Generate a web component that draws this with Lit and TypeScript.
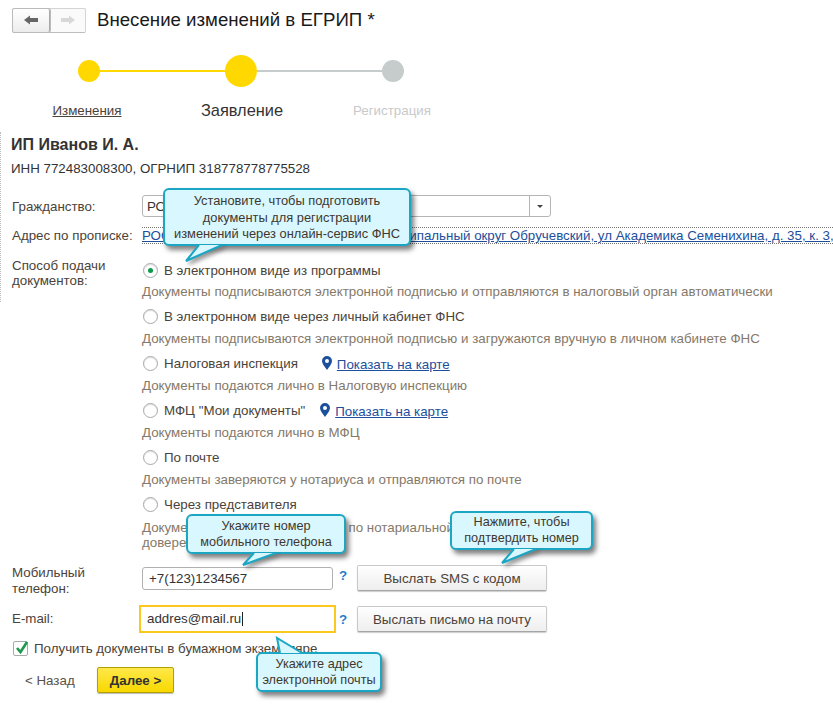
import { LitElement, html, css, svg } from "lit";
import { customElement } from "lit/decorators.js";

const pin = html`<svg class="pin" width="10" height="14" viewBox="0 0 10 14"><path fill="#1c4f9c" fill-rule="evenodd" d="M5 0a5 5 0 0 1 5 5c0 3-3 6-5 9C3 11 0 8 0 5a5 5 0 0 1 5-5zm0 3a2 2 0 1 0 0 4 2 2 0 0 0 0-4z"/></svg>`;

interface Tip { cls: string; lines: string[]; w: number; h: number; tail: string; }
const tips: Tip[] = [
  { cls: "t1", w: 248, h: 58, lines: ["Установите, чтобы подготовить", "документы для регистрации", "изменений через онлайн-сервис ФНС"], tail: "36,57 23,73 59,57" },
  { cls: "t2", w: 160, h: 40, lines: ["Укажите номер", "мобильного телефона"], tail: "68,39 57,51 90,39" },
  { cls: "t3", w: 143, h: 39, lines: ["Нажмите, чтобы", "подтвердить номер"], tail: "64,38 52,52 86,38" },
  { cls: "t4", w: 126, h: 40, lines: ["Укажите адрес", "электронной почты"], tail: "24,1 21,-14 46,1" },
];

@customElement("app-root")
export class AppRoot extends LitElement {
  static styles = css`
    :host { display: block; position: relative; width: 833px; height: 708px; overflow: hidden; background: #fff;
      font-family: "Liberation Sans", Arial, sans-serif; font-size: 13.33px; color: #4b4339; }
    * { box-sizing: border-box; }
    .edge { position: absolute; left: 0; top: 132px; height: 170px; border-left: 1px dotted #bbb; }
    .header { display: flex; align-items: center; height: 24px; margin: 8px 0 0 12px; gap: 11px; }
    .nav { display: flex; width: 74px; height: 25px; border: 1px solid #d4d4d4; border-bottom-color: #bdbdbd; border-radius: 2px; background: #fafafa; }
    .nav div { flex: 1; display: flex; align-items: center; justify-content: center; }
    .nav .back { flex: 0 0 37px; border: 1px solid #a8a8a8; border-width: 0 1px 0 0; background: linear-gradient(#fff, #ececec); box-shadow: 0 0 0 1px #bbb; border-radius: 2px; }
    h1 { margin: 0; font: 400 18.67px "Liberation Sans", sans-serif; color: #1a1a1a; }
    .steps { height: 38px; margin: 20px 0 0 78px; width: 326px; display: flex; align-items: center; justify-content: space-between; }
    .steps .dot { width: 22px; height: 22px; border-radius: 50%; background: #ffd800; }
    .steps .dot.big { width: 32px; height: 32px; }
    .steps .dot.off { background: #c6cbcc; }
    .steps .ln { flex: 1; height: 2px; background: #ffd800; }
    .steps .ln.off { background: #c6cbcc; }
    .labels { display: grid; grid-template-columns: 150px 160px 140px; margin: 8px 0 0 12px; height: 24px; align-items: center; text-align: center; }
    .labels span:nth-child(1) { text-decoration: underline; }
    .labels span:nth-child(2) { font-size: 16.4px; color: #333; }
    .labels span:nth-child(3) { color: #c9c9c9; }
    .name { margin: 14px 0 0 11px; font-weight: 700; font-size: 16px; color: #333; line-height: 18px; }
    .inn { margin: 7px 0 0 11px; line-height: 16px; color: #333; }
    .row { display: grid; grid-template-columns: 130px 1fr; margin: 0 0 0 12px; align-items: center; }
    .r1 { margin-top: 18px; height: 22px; }
    .r2 { margin-top: 10px; height: 17px; white-space: nowrap; }
    .combo { width: 409px; height: 22px; border: 1px solid #b5b5b5; border-radius: 3px; display: flex; align-items: center; padding-left: 4px; color: #333; }
    .combo span { flex: 1; }
    .combo i { width: 21px; height: 20px; border-left: 1px solid #b5b5b5; display: flex; align-items: center; justify-content: center; }
    .combo i::after { content: ""; border: 3px solid transparent; border-top: 3px solid #444; border-bottom: 0; }
    .addr { color: #1c4f9c; text-decoration: underline; border-top: 1px dotted #777; border-bottom: 1px dotted #777; padding-top: 1px; line-height: 14px; overflow: hidden; width: 691px; }
    .way { display: grid; grid-template-columns: 130px 1fr; margin: 14px 0 0 12px; }
    .way label { line-height: 15px; }
    .opts { display: flex; flex-direction: column; }
    .opt { display: flex; align-items: center; height: 23.4px; padding: 1px 0 0 1px; white-space: nowrap; }
    .radio { width: 15px; height: 15px; border: 1px solid #a8a8a8; border-radius: 50%; margin-right: 6px; background: #fff; display: flex; align-items: center; justify-content: center; flex: none; box-shadow: inset 0 1px 1px #ddd; }
    .radio.on::after { content: ""; width: 5px; height: 5px; border-radius: 50%; background: #0a9a4a; }
    .desc { color: #85796a; height: 23.4px; line-height: 22.4px; white-space: nowrap; }
    .desc.two { height: 30px; line-height: 15px; padding-top: 5px; }
    .pin { margin: 0 5px 0 0; flex: none; position: relative; top: -1px; }
    .maplink { color: #1c4f9c; text-decoration: underline; position: relative; top: 1px; }
    .l1 { margin-left: 24px; }
    .l2 { margin-left: 15px; }
    .fr { display: grid; grid-template-columns: 130px 191px 24px 191px; margin-left: 12px; align-items: center; }
    .f1 { margin-top: 21px; grid-template-rows: 24px; height: 24px; }
    .f2 { margin-top: 15px; grid-template-rows: 28px; height: 28px; }
    .fr label { line-height: 16px; }
    .f1 label { padding-top: 6px; }
    .input { height: 23px; border: 1px solid #b0b0b0; border-radius: 3px; padding-left: 6px; line-height: 21px; color: #333; }
    .f2 .input { height: 28px; width: 197px; margin-left: -3px; border: 2px solid #fdc81e; border-radius: 0; padding-left: 6px; line-height: 24px; }
    .input u { display: inline-block; width: 1px; height: 14px; background: #222; vertical-align: -3px; margin-left: 1px; }
    .q { color: #1f7fc9; font-weight: 700; font-size: 13.33px; text-align: left; padding-left: 6px; position: relative; top: -3px; }
    .f2 .q { top: 0; }
    .btn { height: 26px; width: 190px; border: 1px solid #c9c9c9; border-bottom-color: #a5a5a5; border-radius: 2px; background: linear-gradient(#fff, #eee); display: flex; align-items: center; justify-content: center; color: #4b4339; box-shadow: 0 1px 1px #ccc; }
    .check { display: flex; align-items: center; margin: 7px 0 0 13px; height: 16px; }
    .box { width: 15px; height: 15px; border: 1px solid #aaa; border-radius: 2px; margin-right: 6px; position: relative; }
    .box svg { position: absolute; left: 0; top: -2px; }
    .foot { display: flex; align-items: center; margin: 11px 0 0 25px; }
    .backl { width: 72px; color: #5a5246; }
    .next { width: 77px; height: 26px; border: 1px solid #b3a000; border-radius: 2px; background: linear-gradient(#ffe84a, #f8d800); font-weight: 700; color: #333; display: flex; align-items: center; justify-content: center; box-shadow: 0 1px 1px #bbb; }
    .tip { position: absolute; background: #d9f7ff; border: 2px solid #1ba6c4; border-radius: 6px; box-shadow: 3px 4px 5px rgba(0,0,0,.5); color: #40382e; font-size: 12.7px; line-height: 16px; text-align: center; display: flex; flex-direction: column; justify-content: center; white-space: nowrap; }
    .tip svg { position: absolute; left: -2px; top: -2px; overflow: visible; pointer-events: none; filter: drop-shadow(3px 3px 2px rgba(0,0,0,.4)); }
    .t1 { left: 163px; top: 188px; font-size: 12.85px; line-height: 16.5px; padding-top: 2px; }
    .t2 { left: 186px; top: 514px; }
    .t3 { left: 450px; top: 511px; padding-bottom: 2px; }
    .t4 { left: 256px; top: 652px; }
    .t4 svg { filter: none; }
  `;

  render() {
    return html`
      <div class="edge"></div>
      <div class="header">
        <div class="nav">
          <div class="back"><svg width="14" height="10" viewBox="0 0 14 10"><path fill="#666" d="M0 5l6-4.5V3h8v4H6v2.5z"/></svg></div>
          <div><svg width="14" height="10" viewBox="0 0 14 10"><path fill="#d8d8d8" d="M14 5L8 .5V3H0v4h8v2.5z"/></svg></div>
        </div>
        <h1>Внесение изменений в ЕГРИП *</h1>
      </div>
      <div class="steps">
        <div class="dot"></div><div class="ln"></div>
        <div class="dot big"></div><div class="ln off"></div>
        <div class="dot off"></div>
      </div>
      <div class="labels"><span>Изменения</span><span>Заявление</span><span>Регистрация</span></div>
      <div class="name">ИП Иванов И. А.</div>
      <div class="inn">ИНН 772483008300, ОГРНИП 318778778775528</div>
      <div class="row r1"><label>Гражданство:</label><div class="combo"><span>РОССИЯ</span><i></i></div></div>
      <div class="row r2"><label>Адрес по прописке:</label><div class="addr">РОССИЯ, 117036, Москва г, вн.тер.г. муниципальный округ Обручевский, ул Академика Семенихина, д. 35, к. 3,</div></div>
      <div class="way">
        <label>Способ подачи<br />документов:</label>
        <div class="opts">
          <div class="opt"><span class="radio on"></span>В электронном виде из программы</div>
          <div class="desc">Документы подписываются электронной подписью и отправляются в налоговый орган автоматически</div>
          <div class="opt"><span class="radio"></span>В электронном виде через личный кабинет ФНС</div>
          <div class="desc">Документы подписываются электронной подписью и загружаются вручную в личном кабинете ФНС</div>
          <div class="opt"><span class="radio"></span>Налоговая инспекция<span class="l1"></span>${pin}<span class="maplink">Показать на карте</span></div>
          <div class="desc">Документы подаются лично в Налоговую инспекцию</div>
          <div class="opt"><span class="radio"></span>МФЦ "Мои документы"<span class="l2"></span>${pin}<span class="maplink">Показать на карте</span></div>
          <div class="desc">Документы подаются лично в МФЦ</div>
          <div class="opt"><span class="radio"></span>По почте</div>
          <div class="desc">Документы заверяются у нотариуса и отправляются по почте</div>
          <div class="opt"><span class="radio"></span>Через представителя</div>
          <div class="desc two">Документы подготавливает лицо по нотариальной<br />доверенности</div>
        </div>
      </div>
      <div class="fr f1"><label>Мобильный<br />телефон:</label><div class="input">+7(123)1234567</div><div class="q">?</div><div class="btn">Выслать SMS с кодом</div></div>
      <div class="fr f2"><label>E-mail:</label><div class="input">addres@mail.ru<u></u></div><div class="q">?</div><div class="btn">Выслать письмо на почту</div></div>
      <div class="check"><span class="box"><svg width="16" height="16" viewBox="0 0 16 16"><path fill="none" stroke="#1f9a4a" stroke-width="2.6" d="M3 8l3.5 4L13 2"/></svg></span>Получить документы в бумажном экземпляре</div>
      <div class="foot"><span class="backl">&lt; Назад</span><span class="next">Далее &gt;</span></div>
      ${tips.map(t => html`<div class="tip ${t.cls}" style="width:${t.w}px;height:${t.h}px">
        ${t.lines.map(l => html`<div>${l}</div>`)}
        <svg width="${t.w}" height="${t.h}">${svg`<polygon points="${t.tail}" fill="#d9f7ff"/><polyline points="${t.tail}" fill="none" stroke="#1ba6c4" stroke-width="2"/>`}</svg>
      </div>`)}
    `;
  }
}
